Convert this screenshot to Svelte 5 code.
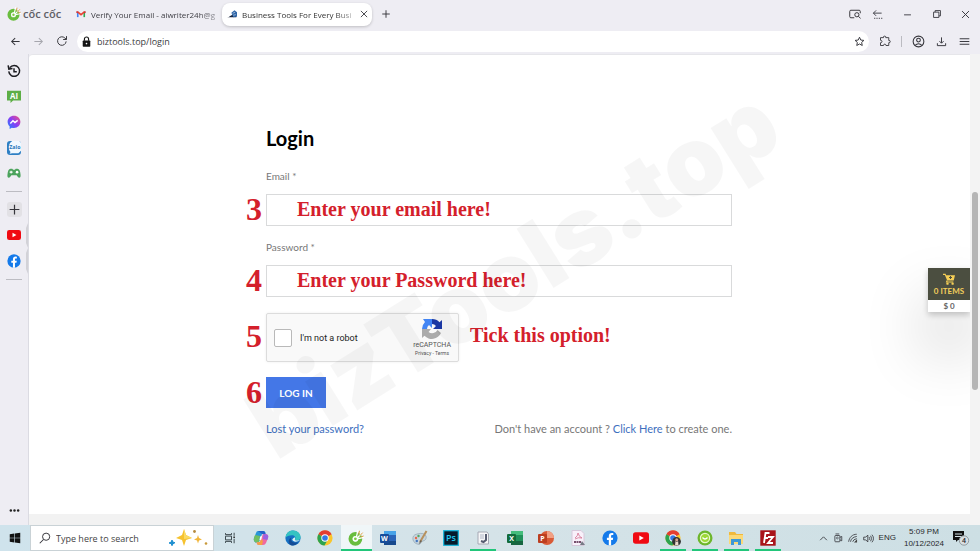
<script>
  let email = $state('');
  let password = $state('');
  let robot = $state(false);
  let address = $state('biztools.top/login');
  let query = $state('');

  const apps = [
    { id: 'taskview', name: 'Task View' },
    { id: 'copilot', name: 'Copilot' },
    { id: 'edge', name: 'Edge' },
    { id: 'chrome', name: 'Chrome' },
    { id: 'coccoc', name: 'Coc Coc', active: true, open: true },
    { id: 'word', name: 'Word' },
    { id: 'paint', name: 'Paint' },
    { id: 'ps', name: 'Photoshop' },
    { id: 'unikey', name: 'Unikey', open: true },
    { id: 'excel', name: 'Excel' },
    { id: 'ppt', name: 'PowerPoint' },
    { id: 'pdf', name: 'PDF' },
    { id: 'facebook', name: 'Facebook' },
    { id: 'youtube', name: 'YouTube' },
    { id: 'chromeuser', name: 'Chrome profile', open: true },
    { id: 'green', name: 'Sync', open: true },
    { id: 'files', name: 'File Explorer', open: true },
    { id: 'filezilla', name: 'FileZilla', open: true }
  ];
</script>

{#snippet icon(id, size = 16)}
  <svg class="icon" width={size} height={size} viewBox="0 0 16 16" aria-hidden="true" fill="none" stroke="#35353b" stroke-width="1">
    {#if id === 'coccoc'}
      <circle cx="7.4" cy="8.8" r="4.9" stroke="#69bd3e" stroke-width="4" />
      <path d="M8 8.6 10 0M8.500 8.800 14.500 2.500M8.500 9l7.500-1.600" stroke="#fff" stroke-width="1.300" />
      <path d="m10.600 4.400.9-3.600M11.900 5.700l2.800-3.100M12.600 7l3-1" stroke="#d99b45" stroke-width="1" />
      <circle cx="7.400" cy="8.800" r="2" fill="#7ecb48" stroke="#fff" stroke-width="1.200" />
    {:else if id === 'gmail'}
      <path d="M2.8 13V4.5" stroke="#4285f4" stroke-width="2.6" />
      <path d="M13.2 13V4.5" stroke="#34a853" stroke-width="2.6" />
      <path d="M2 4.2 8 9l6-4.8" stroke="#ea4335" stroke-width="2.8" />
      <path d="M1.5 3.5v3M14.5 3.5v3" stroke="#c5221f" stroke-width="1.6" />
    {:else if id === 'site'}
      <path d="M0 14c4-1 5-4 9-5l6-2v6H4z" fill="#16233c" stroke="none" />
      <path d="M7 6 12 2l4 3v7l-6 1z" fill="#2f65a7" stroke="none" />
      <path d="m9 7 4-2m-3 5 4-1" stroke="#d7e3f1" />
    {:else if id === 'close'}
      <path d="m3 3 10 10M13 3 3 13" stroke-width="1.4" />
    {:else if id === 'plus'}
      <path d="M8 2v12M2 8h12" stroke-width="1.5" />
    {:else if id === 'tabsearch'}
      <path d="M7 13H2.5Q1 13 1 11.5v-7Q1 3 2.5 3h11Q15 3 15 4.5V7" stroke-width="1.3" />
      <circle cx="10.5" cy="9" r="2.8" stroke-width="1.3" /><path d="m12.5 11 3 3" stroke-width="1.3" />
    {:else if id === 'collapse'}
      <path d="M14 6H2m4-4L2 6l4 4" stroke-width="1.3" /><path d="M3 13.5h12" stroke-width="1.3" stroke-dasharray="1.8 1.6" />
    {:else if id === 'min'}
      <path d="M3 8.5h10" stroke-width="1.3" />
    {:else if id === 'restore'}
      <path d="M2.500 5h8.500v8.500H2.500z M5 5V2.500h8.500V11H11" stroke-width="1.400" />
    {:else if id === 'back' || id === 'forward'}
      <path d={id === 'back' ? 'M14 8H2.500M7.500 3l-5 5 5 5' : 'M2 8h11.500M8.500 3l5 5-5 5'} stroke={id === 'back' ? '#35353b' : '#a6a6ad'} stroke-width="1.5" />
    {:else if id === 'reload'}
      <path d="M13.500 8.500A5.700 5.700 0 1 1 11.800 4l2 1.800M14 1.500v4.500H9.500" stroke-width="1.3" />
    {:else if id === 'lock'}
      <rect x="2.500" y="6.500" width="11" height="9" rx="1" fill="#151515" stroke="none" />
      <path d="M5 7V4.500a3 3 0 0 1 6 0V7" stroke="#151515" stroke-width="1.7" /><circle cx="8" cy="11" r="1.200" fill="#fff" stroke="none" />
    {:else if id === 'star'}
      <path d="m8 1.800 1.900 4.100 4.500.5-3.300 3 .9 4.400L8 11.600l-4 2.200.9-4.400-3.300-3 4.500-.5z" stroke-width="1.400" />
    {:else if id === 'puzzle'}
      <path d="M2 3.500h4Q5.500 1.500 7.500 1.500T9 3.500h4v3.800q2-.3 2 1.500t-2 1.500V14H9.300q0-1.800-1.600-1.800T6 14H2v-3.700q2 0 2-1.600T2 7z" stroke-width="1.200" />
    {:else if id === 'person'}
      <circle cx="8" cy="8" r="6.600" stroke-width="1.300" /><circle cx="8" cy="6.300" r="2.300" stroke-width="1.300" /><path d="M3.800 12.800q4.200-4.200 8.400 0" stroke-width="1.300" />
    {:else if id === 'download'}
      <path d="M8 2v8M5 7.500l3 3 3-3M2 10.500V14h12v-3.500" stroke-width="1.400" />
    {:else if id === 'menu'}
      <path d="M1 4h14M1 8h14M1 12h14" stroke-width="1.400" />
    {:else if id === 'history'}
      <path d="M3.200 4.200A6.200 6.200 0 1 1 2 8.500M1.300 1.500l.8 4.300 4.200-.6M8 4.800v4h3.200" stroke="#1d1d22" stroke-width="1.700" />
    {:else if id === 'ai'}
      <path d="M0 2h16v11H7l-3 3v-3H0z" fill="#5dae46" stroke="none" />
      <text x="8" y="11" text-anchor="middle" font-family="Open Sans, sans-serif" font-size="9" font-weight="700" fill="#fff" stroke="none">AI</text>
    {:else if id === 'messenger'}
      <defs><linearGradient id="msg" x1="0" y1="1" x2="1" y2="0"><stop offset="0" stop-color="#1688ff" /><stop offset=".5" stop-color="#8a3df5" /><stop offset="1" stop-color="#f6527c" /></linearGradient></defs>
      <path d="M8 .8C3.800.8.7 3.800.7 7.700c0 2.100.9 4 2.300 5.200V16l2.500-1.500c.8.200 1.600.3 2.500.3 4.200 0 7.300-3 7.300-7S12.200.8 8 .8z" fill="url(#msg)" stroke="none" />
      <path d="m3.800 9.800 3-3.200 2.300 2 3.100-2.400" stroke="#fff" stroke-width="1.600" />
    {:else if id === 'zalo'}
      <rect x="0" y="0" width="16" height="16" rx="3.500" fill="#2d7fc4" stroke="none" />
      <path d="M6 0h8l2 2v9l-3 3H6l-3 .5 1-2Q2 11 2 7t4-7z" fill="#f1f8ff" stroke="none" />
      <text x="9" y="9.500" text-anchor="middle" font-family="Open Sans, sans-serif" font-size="6" font-weight="700" fill="#2676ba" stroke="none">Zalo</text>
    {:else if id === 'game'}
      <path d="M4 3h2l1 1.300h2L10 3h2q3 0 3.500 7 .3 3.500-1.500 3.500-1.200 0-3-3H5q-1.800 3-3 3Q.2 13.500.5 10 1 3 4 3z" fill="#4ba35c" stroke="none" />
      <path d="M3 7h3.400M4.700 5.300v3.400" stroke="#fff" stroke-width="1.200" /><circle cx="11.500" cy="7" r="1.500" fill="#fff" stroke="none" />
    {:else if id === 'youtube'}
      <rect x="0" y="2.300" width="16" height="11.400" rx="2.600" fill="#f00a12" stroke="none" /><path d="m6.300 5.400 4.500 2.600-4.500 2.600z" fill="#fff" stroke="none" />
    {:else if id === 'facebook'}
      <circle cx="8" cy="8" r="7.600" fill="#147aea" stroke="none" />
      <path d="M6.800 15.600V10H4.900V7.700h1.900V6.200c0-2.200 1.200-3.200 3-3.200l1.500.1v2h-1c-1 0-1.200.5-1.200 1.200v1.400h2.100L10.800 10H9.100v5.600z" fill="#fff" stroke="none" />
    {:else if id === 'dots'}
      <g fill="#222" stroke="none"><circle cx="3.500" cy="8" r="1.500" /><circle cx="8" cy="8" r="1.500" /><circle cx="12.500" cy="8" r="1.500" /></g>
    {:else if id === 'windows'}
      <path d="m1 3 6-.9v5.500H1zM7.800 2 15 1v6.600H7.800zM1 8.400h6v5.500L1 13zM7.800 8.400H15V15l-7.200-1z" fill="#111" stroke="none" />
    {:else if id === 'search'}
      <circle cx="9.500" cy="6.300" r="4.800" stroke-width="1.300" /><path d="M6 10 1 15" stroke-width="1.400" />
    {:else if id === 'taskview'}
      <path d="M2 1.500v2h8v-2M2 14.500v-2h8v2M2 5.500h8v5H2zM13.500 1v4M13.500 9v6" stroke="#3a464b" stroke-width="1.300" /><path d="M12.500 6h2v2h-2z" fill="#222" stroke="none" />
    {:else if id === 'copilot'}
      <path d="M5 1h5q2 0 2.500 2L9 4 6 12l-3 .5Q0 12 1 8l2-5Q3.500 1 5 1z" fill="#2896d8" stroke="none" />
      <path d="M1 8l1-3 5 1-1 6-3 .5Q0 12 1 8z" fill="#70bf62" stroke="none" />
      <path d="M5 1h5q2 0 2.500 2l.3 1.500L9 4z" fill="#2461c9" stroke="none" />
      <path d="M10 4h3q3 .5 2 4l-2 5q-.7 2-3 2H6q-2 0-2.500-2.500L7 12z" fill="#ef6aa0" stroke="none" />
      <path d="m10.500 4 2.500.3q3 .7 2 3.700l-.7 2-4.300-1z" fill="#9a62e2" stroke="none" />
      <path d="M3.500 12.500 7 12l1-3 2 2-1 4H6q-2 0-2.500-2.500z" fill="#f5a044" stroke="none" />
      <path d="m7.200 6.500 1.800-.5-.8 3.700-1.800.3z" fill="#fff" stroke="none" />
    {:else if id === 'edge'}
      <circle cx="8" cy="8" r="7.600" fill="#1671c3" stroke="none" />
      <path d="M.5 7.500C1 3 4 .4 8 .4c4.600 0 7.600 3.200 7.600 6.600 0 2.300-1.600 3.500-3.400 3.500-2 0-2.600-.8-2-1.700.8-1.500-.7-3.600-3.200-3.600-3 0-5.500 1-6.500 2.300z" fill="#35c3c2" stroke="none" />
      <path d="M6.200 7.500c-1.200 3.500 2.200 6.300 6.800 4.700-2 3.300-5 3.500-7 3C3 14 3 9 6.200 7.500z" fill="#144c96" stroke="none" />
      <path d="M9.700 7.200q.8 1.200.2 2-.4 1.300 2.300 1.300l3-.3q-4.500 2.800-7.500.3-1.300-1.500 2-3.300z" fill="#e1f4f8" stroke="none" />
    {:else if id === 'chrome' || id === 'chromeuser'}
      <circle cx="8" cy="8" r="7.600" fill="#f9c62c" stroke="none" />
      <path d="M8 8 1.400 4.200A7.600 7.600 0 0 1 14.600 4.200z" fill="#e43d30" stroke="none" />
      <path d="M8 8 1.400 4.200A7.600 7.600 0 0 0 7.500 15.600l3.300-6z" fill="#2da34f" stroke="none" />
      <circle cx="8" cy="8" r="3.700" fill="#fff" stroke="none" /><circle cx="8" cy="8" r="2.800" fill="#3478e5" stroke="none" />
      {#if id === 'chromeuser'}
        <circle cx="11.500" cy="11.500" r="4.400" fill="#333" stroke="none" /><path d="M10 15.500 10.500 11l1.400 1 1.200-1 .4 4.500z" fill="#e9d9cc" stroke="none" /><circle cx="11.700" cy="9.700" r="1.500" fill="#d5a78e" stroke="none" />
      {/if}
    {:else if id === 'word' || id === 'excel' || id === 'ppt'}
      {#if id === 'ppt'}
        <circle cx="9" cy="8" r="7" fill="#d95a36" stroke="none" /><path d="M9 1a7 7 0 0 1 7 7H9z" fill="#f2a083" stroke="none" />
      {:else}
        <rect x="4" y="1" width="12" height="14" rx="1" fill={id === 'word' ? '#2b65b8' : '#21915a'} stroke="none" />
        <path d="M4 1h12v4H4z" fill={id === 'word' ? '#48a3e8' : '#45bd7c'} stroke="none" />
        <path d="M4 11h12v4H4z" fill={id === 'word' ? '#17498d' : '#176540'} stroke="none" />
      {/if}
      <rect x="0" y="4" width="9" height="9" rx="1" fill={id === 'word' ? '#174c9a' : id === 'excel' ? '#126c3c' : '#bc3e20'} stroke="none" />
      <text x="4.500" y="11" text-anchor="middle" font-family="Open Sans, sans-serif" font-size="7" font-weight="700" fill="#fff" stroke="none">{id === 'word' ? 'W' : id === 'excel' ? 'X' : 'P'}</text>
    {:else if id === 'paint'}
      <path d="M1 10Q0 5 5 4q7-2 9 2 1 4-3 5-2 0-2 2-1 2-4 1-3-1-4-4z" fill="#c5d5df" stroke="#92a5b2" stroke-width=".7" />
      <circle cx="4" cy="8" r="1.200" fill="#e46a4a" stroke="none" /><circle cx="6.500" cy="6" r="1.200" fill="#52a864" stroke="none" /><circle cx="4.800" cy="11" r="1.200" fill="#4578c0" stroke="none" />
      <path d="M14.500 1 8 12" stroke="#b7905d" stroke-width="2" /><path d="m8.500 10-1.800 4.500L10 11z" fill="#6c6255" stroke="none" />
    {:else if id === 'ps'}
      <rect x=".7" y=".7" width="14.600" height="14.600" fill="#071b2b" stroke="#16b7dd" stroke-width="1.200" />
      <text x="8" y="11.400" text-anchor="middle" font-family="Open Sans, sans-serif" font-size="9" font-weight="600" fill="#22c8f0" stroke="none">Ps</text>
    {:else if id === 'unikey'}
      <path d="M3 2h9l1.500 2v10H3z" fill="#f6f6f8" stroke="#a5a8b4" /><path d="M5 4h4v5H5z" fill="#d3d6df" stroke="none" /><path d="M11 4v6l-2.500 2L6 11" stroke="#555b70" stroke-width="2" />
    {:else if id === 'pdf'}
      <path d="M2 .5h9l3 3v12H2z" fill="#f8f0fa" stroke="#d6c8da" /><path d="M5 8q3-2 3-5 1 4 4 5-4-1-7 1" stroke="#d4708e" stroke-width=".8" /><path d="M4 12h7" stroke="#77506e" stroke-width="2" stroke-dasharray="2 .5" /><path d="m10 15 2-4 3 4z" fill="#777b86" stroke="none" />
    {:else if id === 'green'}
      <circle cx="8" cy="8" r="7.500" fill="#6db62c" stroke="none" /><circle cx="8" cy="8" r="4.600" fill="#9dd836" stroke="#e7fac9" stroke-width="1.200" /><path d="M5.500 7.500q2.500 3 5 0" stroke="#fff" stroke-width="1.300" />
    {:else if id === 'files'}
      <path d="M1 2h6l1.500 2H15v10H1z" fill="#f0b93c" stroke="none" /><path d="M1 5h14v9H1z" fill="#fbd978" stroke="none" /><path d="M3 15V9h10v6h-3v-3H6v3z" fill="#3d98d6" stroke="none" />
    {:else if id === 'filezilla'}
      <rect x=".3" y=".3" width="15.400" height="15.400" fill="#a9131a" stroke="none" /><path d="M4 13 5.500 3h4M4.800 8H8M8 7h5l-5 6h5" stroke="#fff" stroke-width="1.800" />
    {:else if id === 'up'}
      <path d="m2 11 6-6 6 6" stroke-width="1.500" />
    {:else if id === 'meet'}
      <rect x="3" y="4" width="8" height="10" rx="1" stroke-width="1.300" /><path d="M4 1.500h6M11 7l3-1.500v7L11 11" stroke-width="1.300" /><circle cx="7" cy="8" r="1.500" />
    {:else if id === 'wifi'}
      <path d="M1 14C2 7 7 2 14 2M4 14q1-7 10-8.500M7.500 14q1-4 6.500-5" stroke-width="1.300" /><path d="m9.500 15 5-5v5z" fill="#444" stroke="none" />
    {:else if id === 'sound'}
      <path d="M1 6h3l3-3v10l-3-3H1zM9 6q1.500 2 0 4M11 4q3 4 0 8M13 2.500q4.500 5.500 0 11" stroke-width="1.200" />
    {:else if id === 'cart'}
      <path d="M0 1h3.500l.6 2H16l-1.700 7H5.600L2.500 2.500H0z" fill="#f6cf56" stroke="none" /><path d="M5.500 10 4.800 12h9" stroke="#f6cf56" stroke-width="1.500" /><path d="M10 4v4M8 6h4" stroke="#4b4e40" stroke-width="1.400" /><circle cx="6" cy="14.200" r="1.600" fill="#f6cf56" stroke="none" /><circle cx="12.800" cy="14.200" r="1.600" fill="#f6cf56" stroke="none" />
    {/if}
  </svg>
{/snippet}

<div class="desktop">
  <header class="tabs">
    <div class="brand">{@render icon('coccoc', 14)}<span>cốc cốc</span></div>
    <button class="tab">{@render icon('gmail', 10)}<span>Verify Your Email - aiwriter24h@g</span></button>
    <div class="tab current">
      {@render icon('site', 10)}<span>Business Tools For Every Busi</span>
      <button class="cell small" aria-label="Close tab">{@render icon('close', 10)}</button>
    </div>
    <button class="cell" aria-label="New tab">{@render icon('plus', 10)}</button>
    <div class="tools">
      <button class="cell" aria-label="Search tabs">{@render icon('tabsearch', 12)}</button>
      <button class="cell" aria-label="Collapse">{@render icon('collapse', 11)}</button>
      <div class="window">
        <button class="cell wide" aria-label="Minimize">{@render icon('min', 11)}</button>
        <button class="cell wide" aria-label="Restore">{@render icon('restore', 10)}</button>
        <button class="cell wide" aria-label="Close window">{@render icon('close', 11)}</button>
      </div>
    </div>
  </header>

  <nav class="toolbar" aria-label="Browser">
    <button class="cell" aria-label="Back">{@render icon('back', 11)}</button>
    <button class="cell" aria-label="Forward">{@render icon('forward', 11)}</button>
    <button class="cell" aria-label="Reload">{@render icon('reload', 12)}</button>
    <div class="address">
      {@render icon('lock', 11)}
      <input aria-label="Address" bind:value={address} />
      <button class="cell small" aria-label="Bookmark">{@render icon('star', 11)}</button>
    </div>
    <button class="cell" aria-label="Extensions">{@render icon('puzzle', 12)}</button>
    <i class="bar"></i>
    <button class="cell" aria-label="Profile">{@render icon('person', 13)}</button>
    <button class="cell" aria-label="Downloads">{@render icon('download', 11)}</button>
    <button class="cell" aria-label="Menu">{@render icon('menu', 11)}</button>
  </nav>

  <div class="body">
    <aside>
      <div class="group">
        {#each ['history', 'ai', 'messenger', 'zalo', 'game'] as id}
          <button aria-label={id}>{@render icon(id, 14)}</button>
        {/each}
      </div>
      <hr />
      <div class="group three">
        <button aria-label="Add"><span class="add">{@render icon('plus', 13)}</span></button>
        <button class="edge" aria-label="YouTube">{@render icon('youtube', 14)}</button>
        <button class="edge" aria-label="Facebook">{@render icon('facebook', 14)}</button>
      </div>
      <hr />
      <button class="more" aria-label="More">{@render icon('dots', 13)}</button>
    </aside>

    <main>
      <form onsubmit={(e) => e.preventDefault()}>
        <h1>Login</h1>
        <label for="email">Email *</label>
        <div class="step">
          <b class="num">3</b>
          <input class="field" id="email" type="email" bind:value={email} />
          <strong class="hint">Enter your email here!</strong>
        </div>
        <label class="second" for="password">Password *</label>
        <div class="step">
          <b class="num">4</b>
          <input class="field" id="password" type="password" bind:value={password} />
          <strong class="hint">Enter your Password here!</strong>
        </div>
        <div class="step captcha-row">
          <b class="num">5</b>
          <div class="captcha">
            <label class="robot"><input type="checkbox" bind:checked={robot} />I'm not a robot</label>
            <div class="recaptcha">
              <svg width="22" height="22" viewBox="0 0 22 22" aria-hidden="true">
                <path d="M11 1a10 10 0 0 1 7.500 3.300L21 2v9h-9l3-3a5 5 0 0 0-4-2z" fill="#1c3aa9" />
                <path d="M1 11a10 10 0 0 1 3-7L2 1h9v9L8 7a5 5 0 0 0-2 4z" fill="#4285f4" />
                <path d="M1 11v9l2.500-2.300A10 10 0 0 0 20 15l-3.500-3a6 6 0 0 1-9 2L10 11z" fill="#ababab" />
              </svg>
              <span>reCAPTCHA</span>
              <small><a href="#privacy">Privacy</a> - <a href="#terms">Terms</a></small>
            </div>
          </div>
          <strong class="tick">Tick this option!</strong>
        </div>
        <div class="step login-row">
          <b class="num">6</b>
          <button class="login" type="submit">LOG IN</button>
        </div>
        <div class="links">
          <a href="#lost">Lost your password?</a>
          <span>Don't have an account ? <a href="#register">Click Here</a> to create one.</span>
        </div>
        <div class="watermark" aria-hidden="true">bizTools.top</div>
      </form>
      <button class="cart">
        <span class="items">{@render icon('cart', 12)}0 ITEMS</span>
        <span class="total">$ 0</span>
      </button>
    </main>
    <div class="scroll"><i></i></div>
  </div>

  <footer>
    <button class="start" aria-label="Start">{@render icon('windows', 12)}</button>
    <label class="search">
      {@render icon('search', 12)}
      <input aria-label="Search" placeholder="Type here to search" bind:value={query} />
      <svg width="40" height="18" viewBox="0 0 40 18" aria-hidden="true">
        <path d="m16 0 2 6 6 3-6 2-2 6-2-6-6-2 6-3z" fill="#f6c22e" />
        <path d="m16 0 2 6 6 3-8 1z" fill="#fada62" />
        <path d="m30 6 1 3 3 1.500-3 1-1 3-1-3-3-1 3-1.500z" fill="#f2b63a" />
        <path d="m4 11 .8 2 2.200.7-2 1-1 2-.8-2L1 14l2.200-.9z" fill="#1e8fd0" stroke="#1e8fd0" />
        <circle cx="26.500" cy="2.500" r="1.400" fill="#b58a3e" /><circle cx="38" cy="14.500" r="1.300" fill="#c89a3a" />
      </svg>
    </label>
    <div class="apps">
      {#each apps as app}
        <button class:active={app.active} class:open={app.open} aria-label={app.name}>{@render icon(app.id, app.id === 'taskview' ? 12 : 16)}</button>
      {/each}
    </div>
    <div class="tray">
      {@render icon('up', 9)}{@render icon('meet', 10)}{@render icon('wifi', 10)}{@render icon('sound', 11)}
      <span>ENG</span>
      <time><span>5:09 PM</span><span>10/12/2024</span></time>
      <button class="notes" aria-label="Notifications">
        <svg width="18" height="16" viewBox="0 0 18 16" aria-hidden="true">
          <path d="M1 1h11v9H6l-2 2v-2H1z" fill="#111" /><path d="M3 4h7M3 6.500h7" stroke="#d3e3e8" />
          <circle cx="12" cy="10.500" r="4.700" fill="#d8dfe2" stroke="#929ba0" />
          <text x="12" y="13" text-anchor="middle" font-family="Open Sans, sans-serif" font-size="7" font-weight="600" fill="#222">4</text>
        </svg>
      </button>
    </div>
  </footer>
</div>

<style>
  :global(body) { margin: 0; }
  .desktop { min-height: 100vh; display: flex; flex-direction: column; background: #eeedf3; font-family: "Open Sans", "Noto Sans", sans-serif; font-size: 9px; color: #3c3c42; overflow: hidden; }
  .desktop :is(*, *::before, *::after) { box-sizing: border-box; }
  button { border: 0; padding: 0; margin: 0; background: none; font: inherit; color: inherit; display: flex; align-items: center; justify-content: center; }
  input { font: inherit; color: inherit; border: 0; padding: 0; margin: 0; min-width: 0; outline: 0; background: none; }
  a { color: #3e6fbe; text-decoration: none; }
  .icon { flex: none; display: block; }
  .cell { width: 23px; height: 20px; flex: none; }
  .cell.small { width: 16px; }
  .cell.wide { width: 29px; }

  .tabs { height: 28px; display: flex; align-items: center; padding-left: 7px; }
  .brand { width: 61px; display: flex; align-items: center; gap: 2px; font: 600 11px/16px "Open Sans", sans-serif; color: #606067; white-space: nowrap; }
  .tab { width: 150px; height: 23px; flex: none; display: flex; align-items: center; justify-content: flex-start; gap: 5px; padding: 0 0 0 8px; border-radius: 8px; font-size: 8px; }
  .tab span { flex: 1; text-align: left; white-space: nowrap; mask-image: linear-gradient(to right, #000 85%, #0006); }
  .tab.current { margin-left: 4px; padding: 0 3px 0 5px; background: #fff; box-shadow: 0 1px 3px #0003; color: #333; }
  .tab + .cell { margin-left: 2px; }
  .tools { margin-left: auto; display: flex; }
  .window { display: flex; margin-left: 4px; }

  .toolbar { height: 26px; display: flex; align-items: center; padding: 0 4px; }
  .address { flex: 1; height: 21px; display: flex; align-items: center; gap: 5px; margin: 0 4px; padding: 0 2px 0 4px; border-radius: 11px; background: #fff; }
  .address input { flex: 1; }
  .bar { width: 1px; height: 11px; margin: 0 5px; background: #bbbbc1; }

  .body { flex: 1; display: flex; }
  aside { width: 29px; flex: none; display: flex; flex-direction: column; align-items: stretch; padding: 4px 0; border-right: 1px solid #dbdbe2; }
  .group { height: 128px; display: grid; grid-auto-rows: 1fr; }
  .group.three { height: 77px; }
  aside hr { width: 16px; height: 1px; margin: 5px 6px; border: 0; background: #bcbcc2; }
  .add { width: 15px; height: 15px; display: grid; place-items: center; background: #e2e1e5; border-radius: 3px; }
  .edge { border-right: 2px solid #d2d2d7; border-block: 5px solid transparent; padding-left: 2px; }
  .more { margin-top: auto; height: 22px; }

  main { flex: 1; position: relative; background: #fff; border-top: 1px solid #e6e6ea; border-bottom: 11px solid #f2f2f2; border-top-left-radius: 4px; padding: 71px 25px 48px 24px; font-family: Lato, sans-serif; overflow: hidden; }
  form { position: relative; max-width: 466px; margin: 0 auto; font-size: 10px; line-height: 16px; color: #777; }
  h1 { margin: 0 0 18px; font-size: 20px; line-height: 24px; color: #000; }
  label { display: block; margin-bottom: 10px; }
  .second { margin-top: 13px; }
  .step { position: relative; display: flex; }
  .field { width: 100%; height: 32px; padding: 0 12px; border: 1px solid #d9dadb; background: #fff; }
  .num, .hint, .tick { color: #d4202b; font-family: "Liberation Serif", serif; font-weight: 700; }
  .num { position: absolute; right: 100%; top: 0; margin-right: 4px; font-size: 32px; line-height: 30px; }
  .hint, .tick { font-size: 20px; line-height: 30px; white-space: nowrap; }
  .hint { position: absolute; left: 31px; top: 0; pointer-events: none; }
  .captcha-row { margin-top: 16px; gap: 11px; align-items: flex-start; }
  .captcha-row .num { top: 8px; }
  .tick { padding-top: 7px; }
  .captcha { width: 193px; height: 49px; display: flex; align-items: center; justify-content: space-between; padding: 0 7px; border: 1px solid #dcdcdc; border-radius: 2px; background: #f9f9f9; box-shadow: 0 0 3px #0001; font-family: Roboto, sans-serif; }
  .robot { display: flex; align-items: center; gap: 8px; margin: 0; font-size: 9px; color: #222; }
  .robot input { appearance: none; width: 18px; height: 18px; border: 1px solid #b9b9b9; border-radius: 2px; background: #fff; }
  .recaptcha { display: flex; flex-direction: column; align-items: center; font-size: 7px; line-height: 8px; color: #555; }
  .recaptcha span { margin-top: 1px; }
  .recaptcha small { font-size: 5px; }
  .recaptcha a { color: inherit; }
  .login-row { margin-top: 15px; }
  .login { width: 60px; height: 31px; background: #4477e7; color: #fff; font-weight: 700; }
  .links { display: flex; flex-wrap: wrap; justify-content: space-between; margin-top: 13px; font-size: 11px; }
  .watermark { position: absolute; left: 53%; top: 47%; transform: translate(-50%, -50%) rotate(-32deg); font: 900 96px/100px Inter, sans-serif; color: rgb(0 0 0 / 3.500%); pointer-events: none; white-space: nowrap; }
  .cart { position: absolute; right: 0; top: 213px; width: 42px; display: block; background: #fff; box-shadow: 0 3px 6px #0003, 0 36px 60px 8px #0002; font-size: 8px; font-weight: 700; }
  .items { height: 32px; display: flex; flex-direction: column; align-items: center; justify-content: center; gap: 2px; line-height: 9px; background: #4b4e40; color: #f3cf5c; }
  .total { display: block; line-height: 12px; color: #666; }
  .scroll { width: 10px; padding: 138px 2px 0; background: #f3f3f3; }
  .scroll i { display: block; height: 198px; border-radius: 3px; background: #b5b5b5; }

  footer { height: 26px; display: flex; background: linear-gradient(to right, #cfe3ec, #d5e3e8 50%, #cddfe4); }
  .start { width: 30px; }
  .search { width: 184px; margin: 0; display: flex; align-items: center; gap: 5px; padding: 0 5px 0 8px; background: #fff; border: 1px solid #c9d2d6; }
  .search input { flex: 1; }
  .search input::placeholder { color: #444; opacity: 1; }
  .apps { flex: 0 1 570px; display: grid; grid-template-columns: repeat(18, 1fr); }
  .apps button { border-bottom: 2px solid transparent; border-top: 2px solid transparent; margin: 0 3px; }
  .apps .open { border-bottom-color: #22c67a; }
  .apps .active { background: #f0f6f8; margin: 0; }
  .tray { margin-left: auto; display: flex; align-items: center; gap: 5px; padding-right: 10px; font: 8px/12px "Liberation Sans", sans-serif; color: #26292b; white-space: nowrap; }
  time { display: flex; flex-direction: column; align-items: center; margin: 0 3px; }
</style>
